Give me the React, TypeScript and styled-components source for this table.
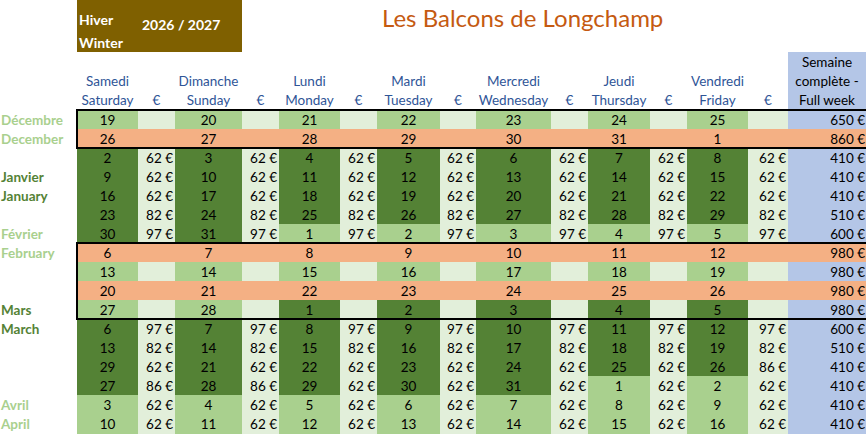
import React from 'react'
import styled, { createGlobalStyle } from 'styled-components'

const GlobalStyle = createGlobalStyle`
    html, body {
        margin: 0;
        padding: 0;
        background: #ffffff;
    }
    body {
        width: 866px;
        height: 437px;
        overflow: hidden;
        font-family: Lato, "Liberation Sans", sans-serif;
    }
`

// day, €, day, €, ... friday, €, full week
const COLUMNS = '61px 37px 67px 37px 61px 37px 63px 36px 75px 37px 62px 37px 61px 40px 80px'

type Tone = 'L' | 'D' | 'O'

interface WeekRow {
    days: number[];
    tones: string;
    prices?: string[];
    week: string;
    peak?: boolean;
}

const same = (v: string): string[] => Array(7).fill(v)

const groups: { boxed: boolean; rows: WeekRow[] }[] = [
    {
        boxed: true,
        rows: [
            { days: [19, 20, 21, 22, 23, 24, 25], tones: 'LLLLLLL', week: '650 €' },
            { days: [26, 27, 28, 29, 30, 31, 1], tones: 'OOOOOOO', week: '860 €', peak: true },
        ],
    },
    {
        boxed: false,
        rows: [
            { days: [2, 3, 4, 5, 6, 7, 8], tones: 'DDDDDDD', prices: same('62 €'), week: '410 €' },
            { days: [9, 10, 11, 12, 13, 14, 15], tones: 'DDDDDDD', prices: same('62 €'), week: '410 €' },
            { days: [16, 17, 18, 19, 20, 21, 22], tones: 'DDDDDDD', prices: same('62 €'), week: '410 €' },
            { days: [23, 24, 25, 26, 27, 28, 29], tones: 'DDDDDDD', prices: same('82 €'), week: '510 €' },
            { days: [30, 31, 1, 2, 3, 4, 5], tones: 'DDLLLLL', prices: same('97 €'), week: '600 €' },
        ],
    },
    {
        boxed: true,
        rows: [
            { days: [6, 7, 8, 9, 10, 11, 12], tones: 'OOOOOOO', week: '980 €', peak: true },
            { days: [13, 14, 15, 16, 17, 18, 19], tones: 'LLLLLLL', week: '980 €' },
            { days: [20, 21, 22, 23, 24, 25, 26], tones: 'OOOOOOO', week: '980 €', peak: true },
            { days: [27, 28, 1, 2, 3, 4, 5], tones: 'LLDDDDD', week: '980 €' },
        ],
    },
    {
        boxed: false,
        rows: [
            { days: [6, 7, 8, 9, 10, 11, 12], tones: 'DDDDDDD', prices: same('97 €'), week: '600 €' },
            { days: [13, 14, 15, 16, 17, 18, 19], tones: 'DDDDDDD', prices: same('82 €'), week: '510 €' },
            {
                days: [29, 21, 22, 23, 24, 25, 26],
                tones: 'DDDDDDD',
                prices: ['62 €', '62 €', '62 €', '62 €', '62 €', '62 €', '86 €'],
                week: '410 €',
            },
            {
                days: [27, 28, 29, 30, 31, 1, 2],
                tones: 'DDDDDLL',
                prices: ['86 €', '86 €', '62 €', '62 €', '62 €', '62 €', '62 €'],
                week: '410 €',
            },
            { days: [3, 4, 5, 6, 7, 8, 9], tones: 'LLLLLLL', prices: same('62 €'), week: '410 €' },
            { days: [10, 11, 12, 13, 14, 15, 16], tones: 'LLLLLLL', prices: same('62 €'), week: '410 €' },
        ],
    },
]

const monthLabels: { text: string; dark?: boolean }[] = [
    { text: 'Décembre' },
    { text: 'December' },
    { text: '' },
    { text: 'Janvier', dark: true },
    { text: 'January', dark: true },
    { text: '' },
    { text: 'Février' },
    { text: 'February' },
    { text: '' },
    { text: '' },
    { text: 'Mars', dark: true },
    { text: 'March', dark: true },
    { text: '' },
    { text: '' },
    { text: '' },
    { text: 'Avril' },
    { text: 'April' },
]

const headers = [
    ['Samedi', 'Saturday'],
    ['Dimanche', 'Sunday'],
    ['Lundi', 'Monday'],
    ['Mardi', 'Tuesday'],
    ['Mercredi', 'Wednesday'],
    ['Jeudi', 'Thursday'],
    ['Vendredi', 'Friday'],
]

const App = () => {
    return (
        <React.Fragment>
            <GlobalStyle />
            <Page>
                <TopBand>
                    <SeasonBox>
                        <SeasonNames>
                            <span>Hiver</span>
                            <span>Winter</span>
                        </SeasonNames>
                        <SeasonYears>2026 / 2027</SeasonYears>
                    </SeasonBox>
                    <Title>Les Balcons de Longchamp</Title>
                </TopBand>

                <HeadRow>
                    <Spacer />
                    <HeadGrid>
                        {headers.map(([fr, en]) => (
                            <React.Fragment key={fr}>
                                <DayHead>
                                    <span>{fr}</span>
                                    <span>{en}</span>
                                </DayHead>
                                <EuroHead>€</EuroHead>
                            </React.Fragment>
                        ))}
                        <WeekHead>
                            <span>Semaine</span>
                            <span>complète -</span>
                            <span>Full week</span>
                        </WeekHead>
                    </HeadGrid>
                </HeadRow>

                <Body>
                    <MonthColumn>
                        {monthLabels.map((m, i) => (
                            <MonthLabel key={i} $dark={m.dark}>{m.text}</MonthLabel>
                        ))}
                    </MonthColumn>
                    <Table>
                        {groups.map((g, gi) => (
                            <Group key={gi} $boxed={g.boxed}>
                                {g.rows.map((r, ri) => (
                                    <Row key={ri}>
                                        {r.days.map((d, di) => (
                                            <React.Fragment key={di}>
                                                <DayCell $tone={r.tones[di] as Tone}>{d}</DayCell>
                                                <PriceCell $peak={r.peak}>
                                                    {r.prices ? r.prices[di] : ''}
                                                </PriceCell>
                                            </React.Fragment>
                                        ))}
                                        <WeekCell $peak={r.peak}>{r.week}</WeekCell>
                                    </Row>
                                ))}
                            </Group>
                        ))}
                    </Table>
                </Body>
            </Page>
        </React.Fragment>
    )
}

export default App


const Page = styled.div`
    width: 866px;
    height: 437px;
    overflow: hidden;
    display: flex;
    flex-direction: column;
    font-size: 13.5px;
    color: #000;
`

const TopBand = styled.div`
    display: flex;
    height: 52px;
    padding-left: 77px;
`

const SeasonBox = styled.div`
    width: 165px;
    height: 52px;
    background: #7f6000;
    color: #ffffff;
    font-weight: 700;
    font-size: 14px;
    display: flex;
`

const SeasonNames = styled.div`
    display: flex;
    flex-direction: column;
    padding: 8px 0 0 2px;
    line-height: 23px;
    width: 63px;
`

const SeasonYears = styled.div`
    padding-top: 13px;
    line-height: 23px;
`

const Title = styled.div`
    margin-left: 140px;
    padding-top: 3px;
    font-size: 24px;
    line-height: 30px;
    color: #c55a11;
    white-space: nowrap;
`

const HeadRow = styled.div`
    display: flex;
    height: 58px;
`

const Spacer = styled.div`
    width: 77px;
    flex: none;
`

const HeadGrid = styled.div`
    display: grid;
    grid-template-columns: ${COLUMNS};
    color: #2f5597;
    line-height: 19px;
`

const DayHead = styled.div`
    display: flex;
    flex-direction: column;
    justify-content: flex-end;
    align-items: center;
    white-space: nowrap;
`

const EuroHead = styled.div`
    display: flex;
    align-items: flex-end;
    justify-content: center;
`

const WeekHead = styled.div`
    display: flex;
    flex-direction: column;
    justify-content: flex-end;
    align-items: center;
    padding: 0 2px 0 0;
    background: #b4c6e7;
    color: #000;
    white-space: nowrap;
`

const Body = styled.div`
    display: flex;
`

const MonthColumn = styled.div`
    width: 77px;
    flex: none;
    display: flex;
    flex-direction: column;
`

const MonthLabel = styled.div<{ $dark?: boolean }>`
    height: 19px;
    line-height: 20px;
    padding-left: 1px;
    font-weight: 700;
    color: ${p => (p.$dark ? '#548235' : '#a9d08e')};
    white-space: nowrap;
`

const Table = styled.div`
    display: flex;
    flex-direction: column;
`

const Group = styled.div<{ $boxed: boolean }>`
    position: relative;
    z-index: ${p => (p.$boxed ? 1 : 0)};
    outline: ${p => (p.$boxed ? '2px solid #000' : 'none')};
    outline-offset: -1px;
`

const Row = styled.div`
    display: grid;
    grid-template-columns: ${COLUMNS};
    height: 19px;
    line-height: 20px;
`

const dayColours: Record<Tone, string> = {
    L: '#a9d08e',
    D: '#548235',
    O: '#f4b084',
}

const DayCell = styled.div<{ $tone: Tone }>`
    background: ${p => dayColours[p.$tone]};
    text-align: center;
`

const PriceCell = styled.div<{ $peak?: boolean }>`
    background: ${p => (p.$peak ? '#f4b084' : '#e2efda')};
    text-align: right;
    padding-right: 2px;
    white-space: nowrap;
`

const WeekCell = styled.div<{ $peak?: boolean }>`
    background: ${p => (p.$peak ? '#f4b084' : '#b4c6e7')};
    text-align: right;
    padding-right: 3px;
    white-space: nowrap;
`
